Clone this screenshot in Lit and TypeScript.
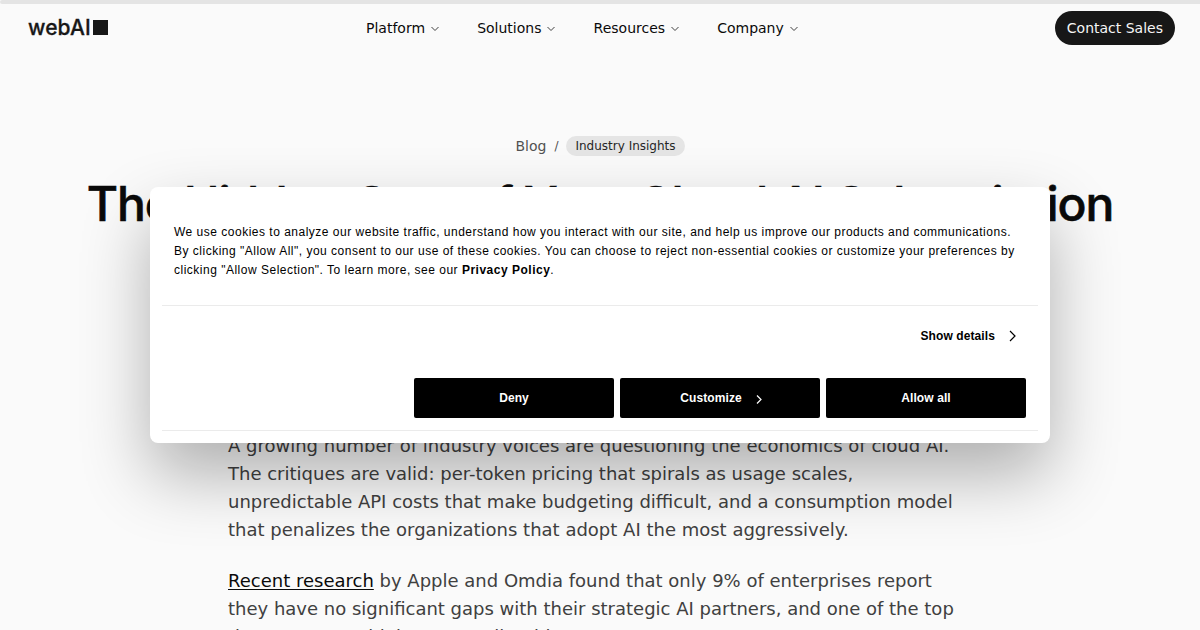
import { LitElement, html, css } from "lit";
import { customElement } from "lit/decorators.js";

@customElement("app-root")
export class AppRoot extends LitElement {
  static styles = css`
    :host { display: block; position: relative; width: 1200px; height: 630px; overflow: hidden; background: #fafafa; font-family: "DejaVu Sans", sans-serif; color: #171717; }
    * { box-sizing: border-box; }
    .progress { height: 4px; background: #e4e4e4; border-radius: 4px 0 0 4px; }
    header { height: 48px; display: flex; align-items: center; padding: 0 25px 0 28px; }
    .brand { width: 338px; display: flex; align-items: center; }
    .logo { display: flex; align-items: center; gap: 2px; margin-bottom: 1px; font: 500 21px/21px Inter, sans-serif; letter-spacing: 0.1px; color: #171717; -webkit-text-stroke: 0.3px #171717; }
    .word { width: 63px; }
    .square { width: 15px; height: 15px; background: #171717; }
    nav { display: flex; gap: 37.1px; font-size: 14px; line-height: 20px; color: #0a0a0a; }
    .item { display: flex; align-items: center; gap: 5px; }
    .item svg { display: block; margin-top: 2px; }
    .contact { margin-left: auto; height: 34px; padding: 0 12px; border-radius: 17px; background: #171717; color: #f5f5f5; font-size: 14px; line-height: 34px; white-space: nowrap; }
    .crumbs { margin-top: 84px; height: 20px; display: flex; justify-content: center; align-items: center; gap: 8px; font-size: 14px; line-height: 20px; color: #525252; }
    .slash { font-size: 12px; }
    .tag { height: 20px; padding: 0 9px; border-radius: 10px; background: #e5e5e5; color: #262626; font-size: 12px; line-height: 20px; }
    h1 { margin: 20px 0 0; text-align: center; white-space: nowrap; font: 500 48px/56px Inter, sans-serif; letter-spacing: -1.05px; color: #0a0a0a; -webkit-text-stroke: 0.6px #0a0a0a; }
    article { margin: 200px 0 0 228px; width: 744px; font-size: 18px; line-height: 28px; color: #404040; }
    p { margin: 0 0 23px; white-space: nowrap; }
    a { color: #0a0a0a; text-decoration: underline; text-underline-offset: 2px; }
    .dialog { position: absolute; left: 150px; top: 187.3px; width: 900px; height: 256px; border-radius: 8px; background: #fff; box-shadow: 0 32px 68px rgba(0, 0, 0, 0.3); padding: 0 12px; color: #000; font: 12px/19px "Liberation Sans", sans-serif; }
    .copy { height: 119px; padding: 36px 12px 0; border-bottom: 1px solid #ebebeb; letter-spacing: 0.5px; white-space: nowrap; }
    .details { height: 72px; padding: 21px 22px 0 0; display: flex; justify-content: flex-end; gap: 14px; font-weight: 700; letter-spacing: 0.1px; }
    .details svg { margin-top: 3px; }
    .actions { display: flex; justify-content: flex-end; gap: 6px; height: 53px; padding: 0 12px 12px 0; border-bottom: 1px solid #ebebeb; }
    .button { width: 200px; height: 40px; border-radius: 2px; background: #000; color: #fff; display: flex; align-items: center; justify-content: center; font-weight: 700; letter-spacing: 0.1px; }
    .button svg { margin: 2px -2px 0 14px; }
  `;

  render() {
    return html`
      <div class="progress"></div>
      <header>
        <div class="brand"><div class="logo"><span class="word">webAI</span><span class="square"></span></div></div>
        <nav>
          ${["Platform", "Solutions", "Resources", "Company"].map(
            (t) => html`<div class="item">${t}<svg width="10" height="6" viewBox="0 0 10 6" fill="none" stroke="#404040"><path d="M1.5 1 5 4.5 8.5 1" /></svg></div>`
          )}
        </nav>
        <div class="contact">Contact Sales</div>
      </header>
      <div class="crumbs"><span>Blog</span><span class="slash">/</span><span class="tag">Industry Insights</span></div>
      <h1>The Hidden Cost of Your Cloud AI Subscription</h1>
      <article>
        <p>A growing number of industry voices are questioning the economics of cloud AI.<br />The critiques are valid: per-token pricing that spirals as usage scales,<br />unpredictable API costs that make budgeting difficult, and a consumption model<br />that penalizes the organizations that adopt AI the most aggressively.</p>
        <p><a>Recent research</a> by Apple and Omdia found that only 9% of enterprises report<br />they have no significant gaps with their strategic AI partners, and one of the top<br />three concerns high usage call or big</p>
      </article>
      <div class="dialog">
        <div class="copy">We use cookies to analyze our website traffic, understand how you interact with our site, and help us improve our products and communications.<br />By clicking "Allow All", you consent to our use of these cookies. You can choose to reject non-essential cookies or customize your preferences by<br />clicking "Allow Selection". To learn more, see our <b>Privacy Policy</b>.</div>
        <div class="details">Show details<svg width="7" height="12" viewBox="0 0 7 12" fill="none" stroke="#000" stroke-width="1.2"><path d="M1 1 6 6 1 11" /></svg></div>
        <div class="actions">
          <div class="button">Deny</div>
          <div class="button">Customize<svg width="6" height="9" viewBox="0 0 6 9" fill="none" stroke="#fff" stroke-width="1.2"><path d="M1 .5 5 4.5 1 8.5" /></svg></div>
          <div class="button">Allow all</div>
        </div>
      </div>
    `;
  }
}
